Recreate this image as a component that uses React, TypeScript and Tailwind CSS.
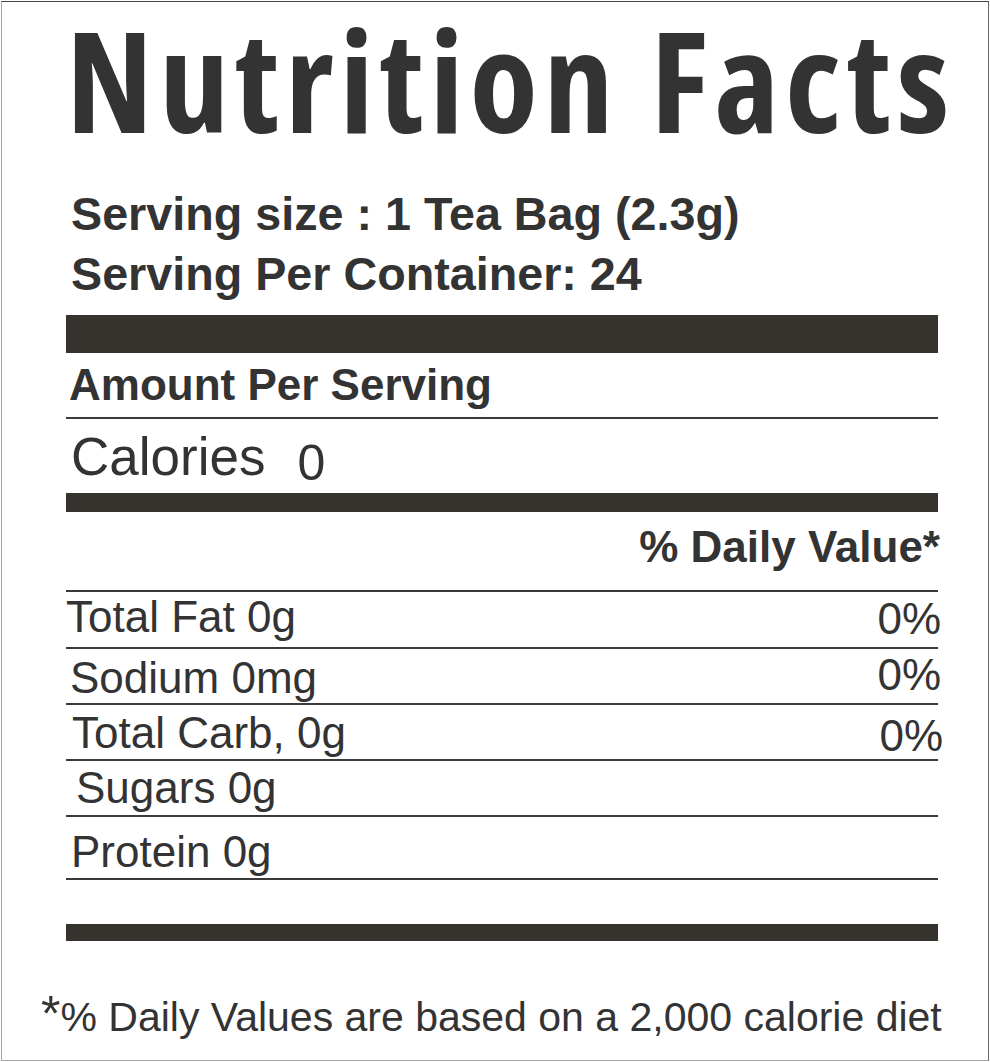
import React from 'react';

const sans = { fontFamily: '"Liberation Sans", Arial, sans-serif' };

const rows = [
  { label: 'Total Fat 0g', pct: '0%', h: 'h-[55px]', lp: 'pl-0 pt-[3px]', pp: 'pt-[5px] -mr-[3px]' },
  { label: 'Sodium 0mg', pct: '0%', h: 'h-[54px]', lp: 'pl-[4px] pt-[7px]', pp: 'pt-[4px] -mr-[3px]' },
  { label: 'Total Carb, 0g', pct: '0%', h: 'h-[54px]', lp: 'pl-[6px] pt-[6px]', pp: 'pt-[9px] -mr-[5px]' },
  { label: 'Sugars 0g', pct: '', h: 'h-[54px]', lp: 'pl-[10px] pt-[5px]', pp: '' },
  { label: 'Protein 0g', pct: '', h: 'h-[61px]', lp: 'pl-[5px] pt-[13px]', pp: '' },
];

const App: React.FC = () => {
  return (
    <div className="w-[990px] h-[1062px] bg-white">
      <div
        className="w-[988px] h-[1060px] ml-px mt-px border border-[#a5a5a5] border-t-[#444444] border-r-[#666666] text-[#333333] flex flex-col"
        style={sans}
      >
        {/* titulo */}
        <h1
          className="ml-[64px] mt-[7px] text-[140px] leading-none font-bold tracking-[5.8px] [font-stretch:87.5%] whitespace-nowrap"
          style={{ fontFamily: '"Open Sans", sans-serif' }}
        >
          Nutrition Facts
        </h1>

        <div className="ml-[64px] w-[872px] flex flex-col">
          <p className="mt-[42px] pl-[5px] text-[46.7px] leading-none font-bold whitespace-nowrap">
            Serving size : 1 Tea Bag (2.3g)
          </p>
          <p className="mt-[13px] pl-[5px] text-[46.7px] leading-none font-bold whitespace-nowrap">
            Serving Per Container: 24
          </p>

          <div className="mt-[18px] h-[38px] bg-[#36332e]"></div>

          <p className="mt-[10px] pl-[3px] text-[44px] leading-none font-bold">Amount Per Serving</p>
          <div className="mt-[10px] h-[2px] bg-[#3a3a3a]"></div>

          <div className="mt-[11px] flex items-start pl-[5px]">
            <span className="text-[53px] leading-none">Calories</span>
            <span className="ml-[32px] mt-[8px] text-[50px] leading-none">0</span>
          </div>

          <div className="mt-[5px] h-[19px] bg-[#36332e]"></div>

          <p className="mt-[13px] -mr-[2px] text-right text-[44px] leading-none font-bold">% Daily Value*</p>
          <div className="mt-[21px] h-[2px] bg-[#3a3a3a]"></div>

          {rows.map((r) => (
            <div key={r.label} className={`${r.h} flex justify-between border-b-2 border-[#3a3a3a] box-content`}>
              <span className={`${r.lp} text-[44px] leading-none whitespace-nowrap`}>{r.label}</span>
              {r.pct && <span className={`${r.pp} text-[44px] leading-none`}>{r.pct}</span>}
            </div>
          ))}

          <div className="mt-[44px] h-[17px] bg-[#36332e]"></div>
        </div>

        <p className="mt-[48px] pl-[39px] flex items-baseline whitespace-nowrap leading-none">
          <span className="text-[50px] leading-none">*</span>
          <span className="text-[41px] leading-none">% Daily Values are based on a 2,000 calorie diet</span>
        </p>
      </div>
    </div>
  );
};

export default App;
